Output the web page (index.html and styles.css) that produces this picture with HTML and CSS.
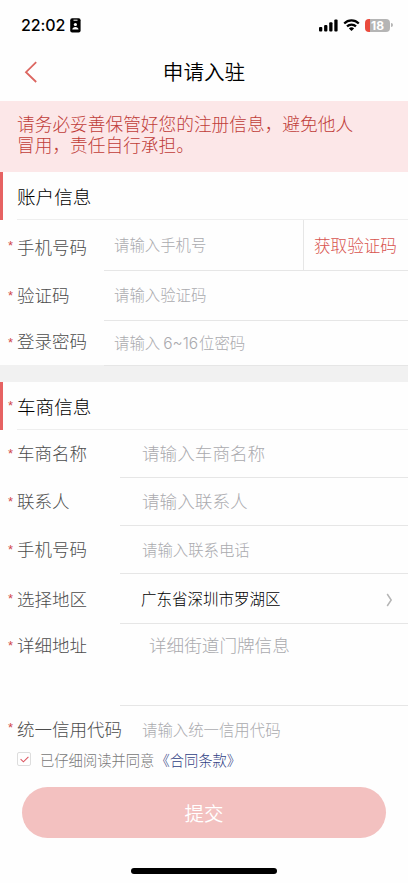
FILE: index.html
```
<!DOCTYPE html>
<html lang="zh-CN">
<head>
<meta charset="utf-8">
<meta name="viewport" content="width=device-width, initial-scale=1">
<title>申请入驻</title>
<link rel="stylesheet" href="styles.css">
</head>
<body>
<header class="status">
  <span class="clock">22:02</span>
  <svg class="card-icon" width="11" height="15" viewBox="0 0 11 15"><rect x=".2" y=".2" width="10.4" height="14.2" rx="2" fill="#000"/><path d="M3.5 2.2h4" stroke="#fff" stroke-width="1"/><circle cx="5.4" cy="6.5" r="1.6" fill="#fff"/><path d="M2.3 11.6c0-3.6 6.2-3.6 6.2 0z" fill="#fff"/></svg>
  <span class="signals">
    <svg width="19" height="13" viewBox="0 0 19 13"><rect x="0" y="8" width="3.3" height="4.5" rx="1"/><rect x="5.1" y="6" width="3.3" height="6.5" rx="1"/><rect x="10.2" y="3.2" width="3.3" height="9.3" rx="1"/><rect x="15.3" y=".6" width="3.3" height="11.9" rx="1"/></svg>
    <svg class="wifi" width="17" height="13" viewBox="0 0 17 13"><path d="M1.2 4.5C5.3.4 11.7.4 15.8 4.5M4 7.4c2.5-2.5 6.5-2.5 9 0" fill="none" stroke="#000" stroke-width="2.2"/><path d="M5.9 9.4c1.5-1.4 3.7-1.4 5.2 0L8.5 12z"/></svg>
    <span class="battery">18</span><span class="battery-tip"></span>
  </span>
</header>
<nav class="nav">
  <svg class="back" width="14" height="24" viewBox="0 0 14 24"><path d="M12.2 2.2 2 12.2l10.2 9.8" fill="none" stroke="#dc6660" stroke-width="1.8"/></svg>
  <h1>申请入驻</h1>
</nav>
<p class="notice">请务必妥善保管好您的注册信息，避免他人<br>冒用，责任自行承担。</p>
<main>
  <section class="account">
    <h2>账户信息</h2>
    <div class="row phone"><label>手机号码</label><div class="field small">请输入手机号</div><div class="code-button">获取验证码</div></div>
    <div class="row code"><label>验证码</label><div class="field small">请输入验证码</div></div>
    <div class="row password"><label>登录密码</label><div class="field small">请输入<span class="digits">6~16</span>位密码</div></div>
  </section>
  <section class="dealer">
    <h2 class="required">车商信息</h2>
    <div class="row"><label>车商名称</label><div class="field">请输入车商名称</div></div>
    <div class="row"><label>联系人</label><div class="field">请输入联系人</div></div>
    <div class="row"><label>手机号码</label><div class="field small">请输入联系电话</div></div>
    <div class="row region"><label>选择地区</label><div class="field small value">广东省深圳市罗湖区<svg class="chevron" width="7" height="14" viewBox="0 0 7 14"><path d="M1.2 1 5.2 7l-4 6" fill="none" stroke="#b5b5b5" stroke-width="1.5"/></svg></div></div>
    <div class="row address"><label>详细地址</label><div class="field">详细街道门牌信息</div></div>
    <div class="row credit"><label>统一信用代码</label><div class="field small">请输入统一信用代码</div></div>
  </section>
</main>
<div class="agreement"><span class="check"><svg width="9" height="7" viewBox="0 0 9 7"><path d="m.6 3.2 2.8 2.6L8.4.8" fill="none" stroke="#dc5560" stroke-width="1.1"/></svg></span><span>已仔细阅读并同意<b>《合同条款》</b></span></div>
<div class="submit">提交</div>
<div class="home"></div>
</body>
</html>
```
FILE: styles.css
```
* { box-sizing: border-box; }
body {
  margin: 0;
  width: 408px;
  height: 883px;
  overflow: hidden;
  background: #fefefe;
  font-family: "Noto Sans CJK SC", sans-serif;
  font-weight: 300;
  color: #4c4c4c;
  display: flex;
  flex-direction: column;
}
h1, h2, p { margin: 0; font-weight: inherit; }
.status { height: 44px; padding: 6px 15px 0 21px; display: flex; align-items: center; flex: none; }
.clock { font: 500 16px/20px Inter, sans-serif; color: #000; letter-spacing: -.1px; width: 49px; }
.signals { margin-left: auto; display: flex; align-items: center; }
.wifi { margin-left: 5px; }
.battery {
  margin-left: 5px; width: 25px; height: 13px; border-radius: 4px;
  background: linear-gradient(90deg, #ea4b3d 5px, #b5b5b5 5px);
  color: #fff; font: 700 12px/13px Inter, sans-serif; text-align: center;
}
.battery-tip { width: 2px; height: 4px; margin-left: 1px; background: #b5b5b5; border-radius: 0 2px 2px 0; }
.nav { height: 57px; flex: none; display: grid; grid-template-columns: 1fr auto 1fr; align-items: start; }
.back { margin: 16px 0 0 24px; }
.nav h1 { font-size: 20.6px; line-height: 54px; color: #000; font-weight: 350; }
.notice { height: 71px; flex: none; padding: 12px 17px 0; background: #fce7e8; color: #c03c38; font-size: 17.7px; line-height: 21px; white-space: nowrap; }
h2 { height: 48px; padding-left: 14px; border-left: 3px solid #e66262; font-size: 18.6px; line-height: 47px; color: #000; background: linear-gradient(#eee, #eee) 14px 100% / 100% 1px no-repeat; }
.required, .row { position: relative; }
.required::before, .row::before {
  content: "*"; position: absolute; left: 8px; top: 50%; margin-top: -9px;
  color: #d0484c; font: 13px/18px "Liberation Sans", sans-serif;
}
.required::before { left: 5px; }
.row { display: grid; grid-template-columns: 120px 1fr; height: 48px; line-height: 46px; }
label { padding-left: 17px; font-size: 17.5px; white-space: nowrap; }
.field { padding-left: 22px; font-size: 17.6px; color: #aaaaae; border-bottom: 1px solid #e6e6e6; white-space: nowrap; }
.small { font-size: 15.4px; }
.account { border-bottom: 17px solid #f1f1f1; }
.account .row { grid-template-columns: 104px 1fr; }
.account .field { padding-left: 10px; }
.account .phone { grid-template-columns: 104px 1fr 105px; height: 51px; line-height: 49px; }
.phone label { padding-top: 2px; }
.code-button { border-left: 1px solid #e6e6e6; border-bottom: 1px solid #e6e6e6; padding-left: 10px; color: #d8544f; font-size: 16.6px; line-height: 50px; white-space: nowrap; }
.account .code { height: 50px; line-height: 47px; }
.account .password { height: 44px; line-height: 39px; }
.password .field { line-height: 43px; }
.digits { font-family: Inter, sans-serif; font-size: 15.5px; font-weight: 300; margin: 0 1px 0 3px; }
.region { height: 49px; line-height: 50px; }
.region .value { display: flex; align-items: center; line-height: 47px; color: #000; font-weight: 300; font-size: 15.5px; padding-left: 21px; padding-bottom: 1px; }
.chevron { margin-left: auto; margin-right: 15px; margin-top: 4px; }
.address { height: 83px; line-height: 44px; }
.address .field { padding-left: 29px; }
.address::before { top: 23px; }
.credit { height: 44px; }
.credit .field { border: 0; }
.agreement { height: 20px; flex: none; display: flex; align-items: center; padding-left: 17px; font-size: 14.3px; line-height: 20px; color: #777; }
.agreement b { font-weight: 300; color: #2f4084; margin-left: 1px; }
.check { width: 14px; height: 14px; margin: -2px 9px 0 0; border: 1px solid #ddd; border-radius: 2px; display: grid; place-items: center; }
.submit { height: 51px; flex: none; margin: 17px 22px 30px; border-radius: 26px; background: #f3c1c0; color: #fff; font-size: 19.5px; font-weight: 350; line-height: 51px; text-align: center; }
.home { width: 146px; height: 6px; flex: none; margin: 0 auto; border-radius: 3px; background: #000; }
```
